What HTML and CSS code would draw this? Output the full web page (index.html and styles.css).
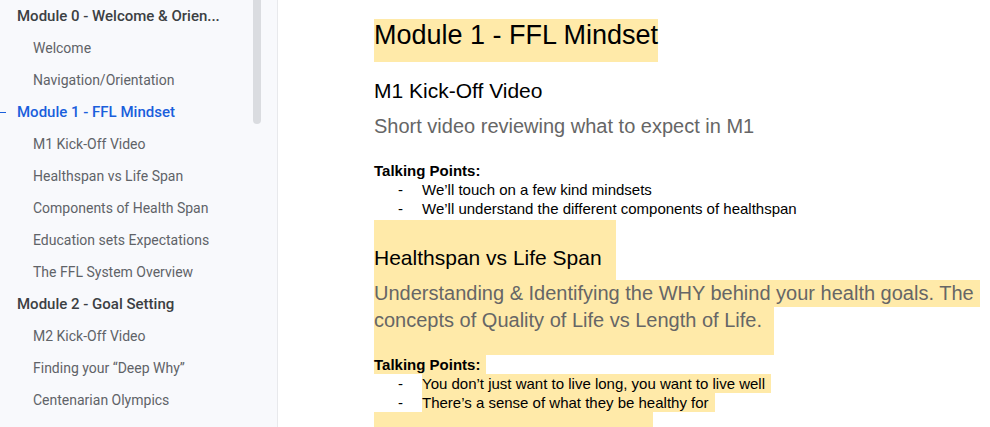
FILE: index.html
```html
<!DOCTYPE html>
<html lang="en">
<head>
<meta charset="utf-8">
<title>Course outline</title>
<link rel="stylesheet" href="styles.css">
</head>
<body>
<div class="app">
  <nav class="outline" aria-label="Document outline">
    <div class="outline-list">
      <a class="item module" href="#m0">Module 0 - Welcome &amp; Orien...</a>
      <a class="item" href="#m0">Welcome</a>
      <a class="item" href="#m0">Navigation/Orientation</a>
      <a class="item module current" href="#m1">Module 1 - FFL Mindset</a>
      <a class="item" href="#kickoff">M1 Kick-Off Video</a>
      <a class="item" href="#healthspan">Healthspan vs Life Span</a>
      <a class="item" href="#m1">Components of Health Span</a>
      <a class="item" href="#m1">Education sets Expectations</a>
      <a class="item" href="#m1">The FFL System Overview</a>
      <a class="item module" href="#m2">Module 2 - Goal Setting</a>
      <a class="item" href="#m2">M2 Kick-Off Video</a>
      <a class="item" href="#m2">Finding your “Deep Why”</a>
      <a class="item" href="#m2">Centenarian Olympics</a>
    </div>
    <div class="scrollbar"></div>
  </nav>
  <main class="page">
    <h1 id="m1" class="marked title">Module 1 - FFL Mindset</h1>
    <h2 id="kickoff" class="heading">M1 Kick-Off Video</h2>
    <p class="summary">Short video reviewing what to expect in M1</p>
    <p class="label">Talking Points:</p>
    <ul class="points">
      <li><span>We’ll touch on a few kind mindsets</span></li>
      <li><span>We’ll understand the different components of healthspan</span></li>
    </ul>
    <h2 id="healthspan" class="heading section marked">Healthspan vs Life Span</h2>
    <p class="summary long"><span class="marked line">Understanding &amp; Identifying the WHY behind your health goals. The</span> <span class="marked line last">concepts of Quality of Life vs Length of Life.</span></p>
    <p class="label marked tail">Talking Points:</p>
    <ul class="points">
      <li><span class="marked tail">You don’t just want to live long, you want to live well</span></li>
      <li><span class="marked tail">There’s a sense of what they be healthy for</span></li>
    </ul>
    <div class="marked next"></div>
  </main>
</div>
</body>
</html>
```
FILE: styles.css
```css
* { box-sizing: border-box; }
body {
  margin: 0;
  background: #fff;
  color: #000;
  font-family: "Liberation Sans", Arial, sans-serif;
}
.app {
  display: flex;
  height: 100vh;
  overflow: hidden;
}
.outline {
  display: flex;
  flex: 0 0 278px;
  justify-content: space-between;
  padding-right: 16px;
  background: #f8f9fc;
  border-right: 1px solid #e8e9ec;
  font-family: Roboto, sans-serif;
}
.outline-list {
  display: flex;
  flex-direction: column;
  width: 240px;
}
.item {
  flex: none;
  padding-left: 33px;
  color: #5f6368;
  font-size: 14px;
  line-height: 32px;
  text-decoration: none;
  white-space: nowrap;
}
.module {
  padding-left: 17px;
  color: #3c4043;
  font-size: 15px;
  font-weight: 500;
}
.current {
  background: linear-gradient(#1a5fdc, #1a5fdc) left center / 6px 1px no-repeat;
  color: #1a5fdc;
}
.scrollbar {
  width: 8px;
  height: 124px;
  background: #dadce0;
  border-radius: 0 0 4px 4px;
}
.page {
  display: flex;
  flex: 1;
  flex-direction: column;
  align-items: flex-start;
  min-width: 0;
  padding: 19px 8px 0 96px;
}
h1, h2, p, ul { margin: 0; padding: 0; font-weight: 400; }
.marked { background: #ffeaa9; }
.title {
  padding-bottom: 10px;
  font-size: 27px;
  line-height: 33px;
}
.heading {
  padding: 15px 0 9px;
  font-size: 21px;
  line-height: 27px;
}
.summary {
  padding-bottom: 21px;
  color: #666;
  font-size: 20px;
  line-height: 27px;
}
.label {
  font-size: 15px;
  font-weight: 700;
  line-height: 19px;
}
.points {
  list-style: none;
  font-size: 15px;
  line-height: 19px;
}
.points li { display: flex; }
.points li::before {
  content: "-";
  width: 24px;
  padding-left: 24px;
}
.section {
  margin-top: 2px;
  padding: 24px 14px 9px 0;
}
.long {
  display: flex;
  flex-direction: column;
  align-items: flex-start;
  padding: 0;
}
.line { padding-right: 6px; }
.last { padding: 0 12px 21px 0; }
.tail { padding-right: 6px; }
.next {
  width: 279px;
  height: 24px;
}
```
